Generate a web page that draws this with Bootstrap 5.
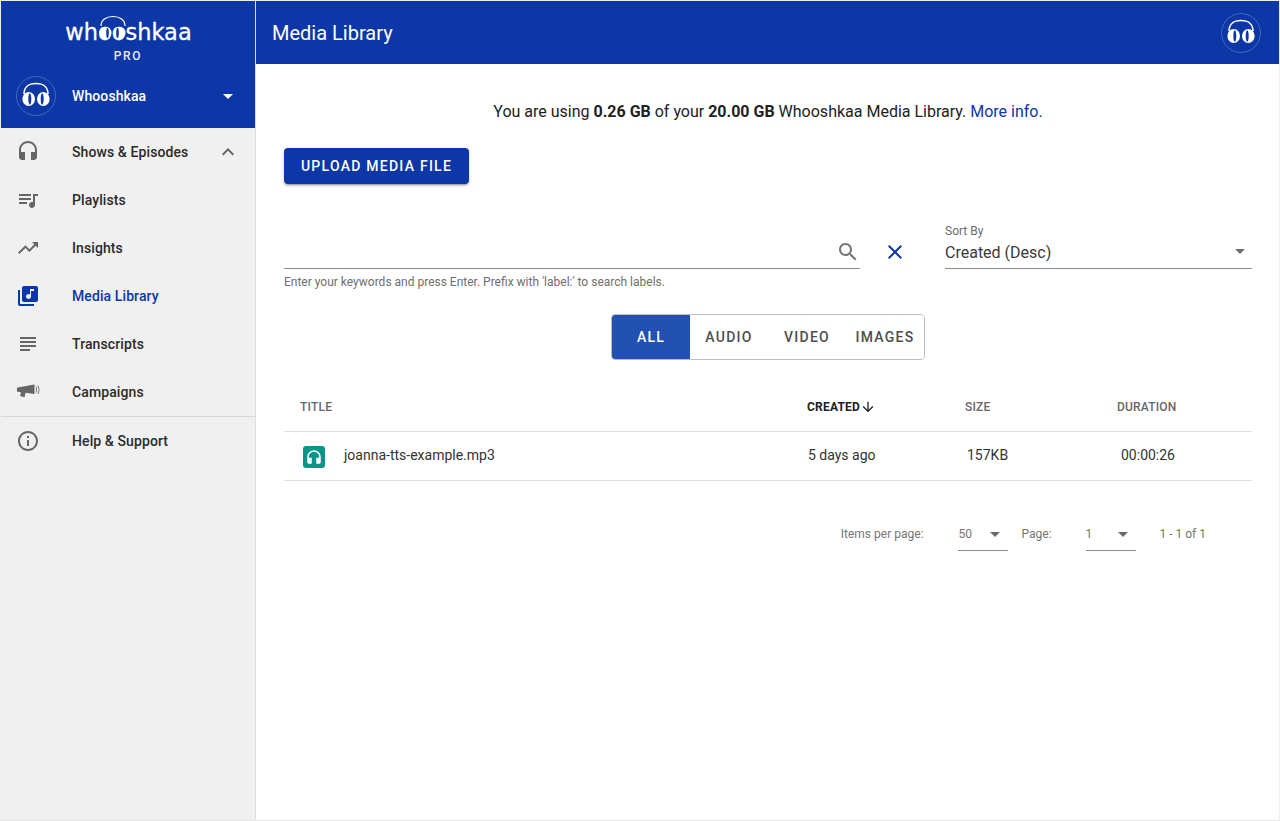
<!DOCTYPE html>
<html lang="en">
<head>
<meta charset="utf-8">
<title>Media Library</title>
<link href="https://cdn.jsdelivr.net/npm/bootstrap@5.3.0/dist/css/bootstrap.min.css" rel="stylesheet">
<style>
html,body{height:100%;overflow:hidden}
body{font-family:Roboto,"Liberation Sans",sans-serif;color:#212121;background:#fff}
.shell{height:821px;border:1px solid #eee;border-bottom-color:#e6e6e6;display:flex}
.side{width:255px;flex:none;background:#f0f0f0;border-right:1px solid #dcdcdc;display:flex;flex-direction:column}
.side-head{background:#0d36a6;height:127px;color:#fff}
.brand{height:63px;position:relative;text-align:center;padding-top:14px}
.brand-word{font-family:"DejaVu Sans",sans-serif;font-size:22.5px;line-height:34px;font-weight:400;display:inline-block;margin-left:1px;-webkit-text-stroke:.3px #fff}
.brand-art{position:absolute;left:90px;top:14px}
.brand-pro{font-size:12px;font-weight:500;letter-spacing:1.6px;line-height:14px;margin-top:0;color:#e6eaf6}
.user-row{height:64px;display:flex;align-items:center;padding:0 22px 0 15px;font-size:14px;font-weight:500;letter-spacing:.1px}
.user-name{margin-left:16px;flex:1}
.caret-down{width:0;height:0;border-left:5px solid transparent;border-right:5px solid transparent;border-top:5px solid currentColor;display:block}
.side-nav{--bs-list-group-bg:transparent;--bs-list-group-border-width:0;--bs-list-group-border-radius:0}
.side-link{height:48px;display:flex;align-items:center;padding:0 0 0 15px;font-size:14px;font-weight:500;letter-spacing:.1px;color:#2b2b2b;background:transparent;border:0}
.side-link svg.ico{width:24px;height:24px;fill:#666;flex:none;margin-right:32px}
.side-link svg.chev{margin-right:15px;fill:#666}
.side-active{color:#0d36a6}
.side-active svg.ico{fill:#0d36a6}
.side-sep{height:1px;background:#d6d6d6}
.main{flex:1;min-width:0;display:flex;flex-direction:column}
.top-bar{height:63px;background:#0d36a6;color:#fff;padding:0 18px 0 16px;display:flex;align-items:center;justify-content:space-between;font-size:20px}
.page{padding:37px 27px 0 28px}
.usage{text-align:center;font-size:16px;line-height:22px}
.usage a{color:#0d36a6;text-decoration:none}
.usage b{font-weight:700}
.btn-upload{margin-top:25px;height:36px;width:185px;background:#0d36a6;color:#fff;border:0;border-radius:4px;font-size:14px;font-weight:500;letter-spacing:1.25px;box-shadow:0 3px 1px -2px rgba(0,0,0,.2),0 2px 2px 0 rgba(0,0,0,.14),0 1px 5px 0 rgba(0,0,0,.12);padding:0}
.btn-upload:hover{background:#0d36a6;color:#fff}
.filters{margin-top:31px;display:flex}
.search-col{width:576px;flex:none}
.search-line{height:54px;border-bottom:1px solid #8c8c8c;display:flex;align-items:center;justify-content:flex-end;padding:20px 0 0}
.search-line svg{width:24px;height:24px;fill:#757575}
.hint{font-size:12px;line-height:14px;color:#6f6f6f;margin-top:6px}
.clear-col{width:85px;flex:none;padding:25px 0 0 23px}
.clear-col svg{width:24px;height:24px;fill:#0d36a6;display:block}
.sort-col{flex:1;height:54px;border-bottom:1px solid #8c8c8c;position:relative;padding-top:9px}
.sort-label{font-size:12px;line-height:14px;color:#6b6b6b;display:block}
.sort-val{font-size:16px;line-height:20px;color:#3a3a3a;margin-top:5px;display:block}
.sort-col .caret-down{position:absolute;right:7px;top:34px;color:#6f6f6f}
.tog-wrap{margin-top:25px;display:flex;justify-content:center}
.tog{border:1px solid #bdbdbd;border-radius:4px;overflow:hidden;height:46px;display:flex;background:#fff}
.tog-b{height:44px;width:78px;flex:none;border:0;background:#fff;color:#4e4e4e;font-size:14px;font-weight:500;letter-spacing:1.25px;padding:0;border-radius:0}
.tog-on{background:#2350b3;color:#fff}
.mtable{margin:26px 0 0;table-layout:fixed;width:100%;--bs-table-bg:transparent;--bs-table-border-color:#e0e0e0;color:#333}
.mtable th{height:45px;font-size:12px;font-weight:500;letter-spacing:.2px;color:#666;padding:0 0 2px;vertical-align:middle;border-bottom:1px solid #e0e0e0}
.mtable td{height:49px;font-size:14px;padding:0;vertical-align:middle;color:#333;border-bottom:1px solid #e0e0e0}
.c-title{width:523px}
.c-created{width:158px}
.c-size{width:152px}
.pad-t{padding-left:16px!important}
.cell-file{padding-top:2px!important}
.cell-created{padding-left:1px!important}
.cell-size{padding-left:2px!important}
.cell-dur{padding-left:4px!important}
.th-on{color:#212121!important;font-weight:700!important}
.th-on svg{width:16px;height:16px;fill:#212121;vertical-align:-4px}
.file-ic{width:22px;height:22px;background:#0b9488;border-radius:3px;display:inline-flex;align-items:center;justify-content:center;margin:0 19px 0 3px;vertical-align:middle}
.file-ic svg{width:18px;height:18px;fill:#fff}
.pager{margin-top:33px;display:flex;justify-content:flex-end;align-items:flex-start;font-size:12px;color:#757575;padding-right:46px}
.pg-sel{width:50px;height:37px;border-bottom:1px solid #8c8c8c;position:relative;line-height:40px}
.pg-sel .caret-down{position:absolute;right:8px;top:18px;color:#6a6a6a}
.pg-text{line-height:40px}
.gap-a{margin-left:35px}
.gap-b{margin-left:13px}
.gap-c{margin-left:34px}
.gap-d{margin-left:24px}
</style>
</head>
<body>
<svg width="0" height="0" class="position-absolute">
<defs>
<symbol id="wk" viewBox="0 0 40 40">
<circle cx="20" cy="20" r="19.5" fill="none" stroke="#5d7cce" stroke-width=".7"/>
<path d="M8 18C8 11 13 7.500 20 7.500S32 11 32 18" fill="none" stroke="#fff" stroke-width="1.600"/>
<ellipse cx="12.700" cy="23" rx="6.300" ry="7" fill="#fff"/>
<ellipse cx="27.300" cy="23" rx="6.300" ry="7" fill="#fff"/>
<ellipse cx="13.800" cy="23" rx="1.500" ry="5.800" fill="#0d36a6"/>
<ellipse cx="26.200" cy="23" rx="1.500" ry="5.800" fill="#0d36a6"/>
</symbol>
</defs>
</svg>
<div class="shell">
<aside class="side">
<div class="side-head">
<div class="brand">
<span class="brand-word">whooshkaa</span>
<svg class="brand-art" width="44" height="26" viewBox="0 0 44 26"><path d="M10 11C10 5 15 1.500 22 1.500S34 5 34 11" fill="none" stroke="#fff" stroke-width="1.200"/><ellipse cx="14.500" cy="18" rx="6" ry="6.200" fill="#fff"/><ellipse cx="28.500" cy="18" rx="6" ry="6.200" fill="#fff"/><ellipse cx="16.500" cy="18" rx="1.300" ry="5" fill="#0d36a6"/><ellipse cx="26.500" cy="18" rx="1.300" ry="5" fill="#0d36a6"/></svg>
<div class="brand-pro">PRO</div>
</div>
<div class="user-row">
<svg width="40" height="40"><use href="#wk"/></svg>
<span class="user-name">Whooshkaa</span>
<span class="caret-down"></span>
</div>
</div>
<nav class="list-group side-nav">
<a class="list-group-item side-link" href="#"><svg class="ico" viewBox="0 0 24 24"><path d="M12 1c-4.970 0-9 4.030-9 9v7c0 1.660 1.340 3 3 3h3v-8H5v-2c0-3.870 3.130-7 7-7s7 3.130 7 7v2h-4v8h3c1.660 0 3-1.340 3-3v-7c0-4.970-4.030-9-9-9z"/></svg><span class="flex-grow-1">Shows &amp; Episodes</span><svg class="chev" width="24" height="24" viewBox="0 0 24 24"><path d="M12 8l-6 6 1.410 1.410L12 10.830l4.590 4.580L18 14z"/></svg></a>
<a class="list-group-item side-link" href="#"><svg class="ico" viewBox="0 0 24 24"><path d="M15 6H3v2h12V6zm0 4H3v2h12v-2zM3 16h8v-2H3v2zM17 6v8.180c-.31-.11-.65-.18-1-.18-1.660 0-3 1.340-3 3s1.340 3 3 3 3-1.340 3-3V8h3V6h-5z"/></svg>Playlists</a>
<a class="list-group-item side-link" href="#"><svg class="ico" viewBox="0 0 24 24"><path d="M16 6l2.290 2.290-4.880 4.880-4-4L2 16.590 3.410 18l6-6 4 4 6.300-6.290L22 12V6z"/></svg>Insights</a>
<a class="list-group-item side-link side-active" href="#"><svg class="ico" viewBox="0 0 24 24"><path d="M20 2H8c-1.100 0-2 .9-2 2v12c0 1.100.9 2 2 2h12c1.100 0 2-.9 2-2V4c0-1.100-.9-2-2-2zm-2 5h-3v5.500c0 1.380-1.120 2.500-2.500 2.500S10 13.880 10 12.500s1.120-2.500 2.500-2.500c.57 0 1.080.19 1.500.51V5h4v2zM4 6H2v14c0 1.100.9 2 2 2h14v-2H4V6z"/></svg>Media Library</a>
<a class="list-group-item side-link" href="#"><svg class="ico" viewBox="0 0 24 24"><path d="M4 5h16v2H4zM4 9h16v2H4zM4 13h16v2H4zM4 17h10v2H4z"/></svg>Transcripts</a>
<a class="list-group-item side-link" href="#"><svg class="ico" viewBox="0 0 24 24"><path d="M1.500 7.500 18.500 4.500v9.500L9.500 12.800 8.500 17.200 4 16 5 12.300 1.500 11.800C.7 11.700.7 7.700 1.500 7.500z"/><path d="M20 6.500c.8 1.500.8 4.500 0 6M22 5.500c1.300 2.200 1.300 6.300 0 8.500" fill="none" stroke="#666" stroke-width=".9"/></svg>Campaigns</a>
<div class="side-sep"></div>
<a class="list-group-item side-link" href="#"><svg class="ico" viewBox="0 0 24 24"><path d="M11 7h2v2h-2zm0 4h2v6h-2zm1-9C6.480 2 2 6.480 2 12s4.480 10 10 10 10-4.480 10-10S17.520 2 12 2zm0 18c-4.410 0-8-3.590-8-8s3.590-8 8-8 8 3.590 8 8-3.590 8-8 8z"/></svg>Help &amp; Support</a>
</nav>
</aside>
<div class="main">
<header class="top-bar">
<span>Media Library</span>
<svg width="40" height="40"><use href="#wk"/></svg>
</header>
<main class="page">
<p class="usage mb-0">You are using <b>0.26 GB</b> of your <b>20.00 GB</b> Whooshkaa Media Library. <a href="#">More info.</a></p>
<button class="btn btn-upload" type="button">UPLOAD MEDIA FILE</button>
<div class="filters">
<div class="search-col">
<div class="search-line"><svg viewBox="0 0 24 24"><path d="M15.500 14h-.79l-.28-.27C15.410 12.590 16 11.110 16 9.500 16 5.910 13.090 3 9.500 3S3 5.910 3 9.500 5.910 16 9.500 16c1.610 0 3.090-.59 4.230-1.570l.27.28v.79l5 4.990L20.490 19l-4.990-5zm-6 0C7.010 14 5 11.990 5 9.500S7.010 5 9.500 5 14 7.010 14 9.500 11.990 14 9.500 14z"/></svg></div>
<div class="hint">Enter your keywords and press Enter. Prefix with 'label:' to search labels.</div>
</div>
<div class="clear-col"><svg viewBox="0 0 24 24"><path d="M19 6.410L17.590 5 12 10.590 6.410 5 5 6.410 10.590 12 5 17.590 6.410 19 12 13.410 17.590 19 19 17.590 13.410 12z"/></svg></div>
<div class="sort-col"><span class="sort-label">Sort By</span><span class="sort-val">Created (Desc)</span><span class="caret-down"></span></div>
</div>
<div class="tog-wrap">
<div class="tog" role="group">
<button class="btn tog-b tog-on" type="button">ALL</button>
<button class="btn tog-b" type="button">AUDIO</button>
<button class="btn tog-b" type="button">VIDEO</button>
<button class="btn tog-b" type="button">IMAGES</button>
</div>
</div>
<table class="table mtable">
<thead>
<tr><th class="c-title pad-t">TITLE</th><th class="c-created th-on">CREATED<svg viewBox="0 0 24 24"><path d="M20 12l-1.410-1.410L13 16.170V4h-2v12.170l-5.580-5.590L4 12l8 8 8-8z"/></svg></th><th class="c-size">SIZE</th><th>DURATION</th></tr>
</thead>
<tbody>
<tr><td class="pad-t cell-file"><span class="file-ic"><svg viewBox="0 0 24 24"><path d="M12 3c-4.970 0-9 4.030-9 9v7c0 1.100.9 2 2 2h4v-8H5v-1c0-3.870 3.130-7 7-7s7 3.130 7 7v1h-4v8h4c1.100 0 2-.9 2-2v-7c0-4.970-4.030-9-9-9z"/></svg></span>joanna-tts-example.mp3</td><td class="cell-created">5 days ago</td><td class="cell-size">157KB</td><td class="cell-dur">00:00:26</td></tr>
</tbody>
</table>
<div class="pager">
<span class="pg-text">Items per page:</span>
<div class="pg-sel gap-a">50<span class="caret-down"></span></div>
<span class="pg-text gap-b">Page:</span>
<div class="pg-sel gap-c">1<span class="caret-down"></span></div>
<span class="pg-text gap-d">1 - 1 of 1</span>
</div>
</main>
</div>
</div>
</body>
</html>
